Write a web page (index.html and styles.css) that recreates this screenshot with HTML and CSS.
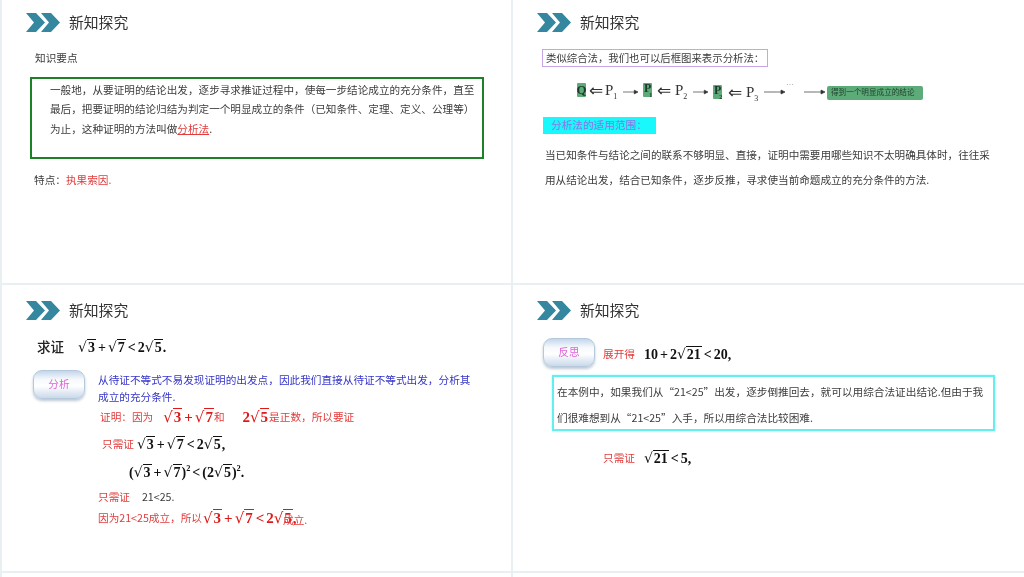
FILE: index.html
```html
<!DOCTYPE html>
<html lang="zh">
<head>
<meta charset="utf-8">
<title>新知探究</title>
<link rel="stylesheet" href="styles.css">
</head>
<body>
<main class="deck">

<section class="slide s1">
  <header class="head">
    <svg class="chev" viewBox="0 0 34 19"><path d="M0 0H10L19 9.500L10 19H0L8 9.500Z"/><path d="M15 0H25L34 9.500L25 19H15L23 9.500Z"/></svg>
    <h2 class="title">新知探究</h2>
  </header>
  <p class="t label">知识要点</p>
  <div class="greenbox">
    <p class="t def">一般地，从要证明的结论出发，逐步寻求推证过程中，使每一步结论成立的充分条件，直至最后，把要证明的结论归结为判定一个明显成立的条件（已知条件、定理、定义、公理等）为止，这种证明的方法叫做<u class="red">分析法</u>.</p>
  </div>
  <p class="t feature">特点：<span class="red">执果索因.</span></p>
</section>

<section class="slide s2">
  <header class="head">
    <svg class="chev" viewBox="0 0 34 19"><path d="M0 0H10L19 9.500L10 19H0L8 9.500Z"/><path d="M15 0H25L34 9.500L25 19H15L23 9.500Z"/></svg>
    <h2 class="title">新知探究</h2>
  </header>
  <p class="t purplebox">类似综合法，我们也可以后框图来表示分析法：</p>
  <div class="flow">
    <b class="tag">Q</b><span class="imp">⇐</span><span class="p">P<sub>1</sub></span>
    <svg class="arr a1" viewBox="0 0 16 6"><path d="M0 3H13M16 3L12 1V5Z"/></svg>
    <span class="tag tp">P<sub>1</sub></span><span class="imp imp2">⇐</span><span class="p">P<sub>2</sub></span>
    <svg class="arr a1" viewBox="0 0 16 6"><path d="M0 3H13M16 3L12 1V5Z"/></svg>
    <span class="tag tp low">P<sub>2</sub></span><span class="imp imp3 low">⇐</span><span class="p low">P<sub>3</sub></span>
    <svg class="arr a2" viewBox="0 0 21 6"><path d="M0 3H18M21 3L17 1V5Z"/></svg>
    <span class="dots">…</span>
    <svg class="arr a2" viewBox="0 0 21 6"><path d="M0 3H18M21 3L17 1V5Z"/></svg>
    <span class="result">得到一个明显成立的结论</span>
  </div>
  <p class="t cyanbar">分析法的适用范围：</p>
  <p class="t scope">当已知条件与结论之间的联系不够明显、直接，证明中需要用哪些知识不太明确具体时，往往采用从结论出发，结合已知条件，逐步反推，寻求使当前命题成立的充分条件的方法.</p>
</section>

<section class="slide s3">
  <header class="head">
    <svg class="chev" viewBox="0 0 34 19"><path d="M0 0H10L19 9.500L10 19H0L8 9.500Z"/><path d="M15 0H25L34 9.500L25 19H15L23 9.500Z"/></svg>
    <h2 class="title">新知探究</h2>
  </header>
  <div class="prove"><span class="provelabel">求证</span><span class="m m14"><i>√</i><s>3</s><em>+</em><i>√</i><s>7</s><em>&lt;</em>2<i>√</i><s>5</s>.</span></div>
  <div class="analysis">
    <span class="pill">分析</span>
    <p class="t blue">从待证不等式不易发现证明的出发点，因此我们直接从待证不等式出发，分析其成立的充分条件.</p>
  </div>
  <div class="t red line l1">证明：因为<span class="m mred m1"><i>√</i><s>3</s><em>+</em><i>√</i><s>7</s></span>和<span class="m mred m2">2<i>√</i><s>5</s></span>是正数，所以要证</div>
  <div class="t red line l2">只需证<span class="m m14 m3"><i>√</i><s>3</s><em>+</em><i>√</i><s>7</s><em>&lt;</em>2<i>√</i><s>5</s>,</span></div>
  <div class="line l3"><span class="m m14">(<i>√</i><s>3</s><em>+</em><i>√</i><s>7</s>)<sup>2</sup><em>&lt;</em>(2<i>√</i><s>5</s>)<sup>2</sup>.</span></div>
  <div class="t line l4"><span class="red">只需证</span><span class="ineq">21&lt;25.</span></div>
  <div class="t red line l5">因为21&lt;25成立，所以<span class="over"><span class="m mred m4"><i>√</i><s>3</s><em>+</em><i>√</i><s>7</s><em>&lt;</em>2<i>√</i><s>5</s>,</span><span class="shift2">成立.</span></span></div>
</section>

<section class="slide s4">
  <header class="head">
    <svg class="chev" viewBox="0 0 34 19"><path d="M0 0H10L19 9.500L10 19H0L8 9.500Z"/><path d="M15 0H25L34 9.500L25 19H15L23 9.500Z"/></svg>
    <h2 class="title">新知探究</h2>
  </header>
  <div class="expand">
    <span class="pill">反思</span>
    <span class="t red exlabel">展开得</span>
    <span class="m m14 exm">10<em>+</em>2<i>√</i><s>21</s><em>&lt;</em>20,</span>
  </div>
  <p class="t cyanbox">在本例中，如果我们从“21&lt;25”出发，逐步倒推回去，就可以用综合法证出结论.但由于我们很难想到从“21&lt;25”入手，所以用综合法比较困难.</p>
  <div class="need"><span class="t red">只需证</span><span class="m m14 exm2"><i>√</i><s>21</s><em>&lt;</em>5,</span></div>
</section>

<section class="slide"></section>
<section class="slide"></section>
</main>
</body>
</html>
```
FILE: styles.css
```css
* { box-sizing: border-box; margin: 0; padding: 0; }
html, body { width: 1024px; height: 577px; overflow: hidden; }
body { background: #e9f0f2; font-family: "Noto Sans CJK SC", "Liberation Sans", sans-serif; }

.deck {
  display: grid;
  grid-template-columns: 509px 511px;
  grid-template-rows: 283px 286px 4px;
  column-gap: 2px;
  row-gap: 2px;
  margin-left: 2px;
}
.slide { background: #fff; overflow: hidden; filter: blur(0.35px); }

.head { display: flex; align-items: center; gap: 9px; height: 19px; margin-top: 13px; margin-left: 24px; }
.s3 .head, .s4 .head { margin-top: 16px; }
.chev { width: 34px; height: 19px; fill: #35879f; flex: none; }
.title { font-size: 14.800px; font-weight: 400; color: #333; line-height: 19px; position: relative; top: -1px; }

.t { font-size: 10.65px; color: #3c3c3c; line-height: 16px; }
.red { color: #e23c3c; }

.label { margin: 18px 0 0 33px; }
.greenbox { margin: 11px 0 0 28px; width: 454px; height: 82px; border: 2px solid #1f8126; padding: 1px 6px 0 18px; }
.def { line-height: 19.3px; font-size: 10.62px; }
.feature { margin: 13px 0 0 32px; }

.purplebox { margin: 17px 0 0 29px; width: 226px; height: 18px; border: 1.500px solid #c8a6e6; padding-left: 3px; line-height: 15px; font-size: 10.4px; white-space: nowrap; }
.flow { display: flex; align-items: center; height: 20px; margin: 13px 0 0 64px; font-family: "Liberation Serif", serif; font-size: 15px; color: #333; }
.tag { background: #5cab78; color: #1f3a2a; height: 14px; width: 9px; border-radius: 1px; font-size: 13px; line-height: 14px; display: flex; justify-content: center; font-family: "Liberation Serif", serif; flex: none; }
.tp { font-weight: 700; font-size: 12px; line-height: 11px; justify-content: flex-start; padding-left: 1px; }
.tag sub { font-size: 6px; line-height: 8px; height: 8px; margin: 8px 0 0 -2px; }
.imp { width: 14px; margin: 0 2px 0 3px; font-size: 17px; line-height: 16px; text-align: center; font-family: "DejaVu Sans", sans-serif; flex: none; }
.imp2 { margin: 0 4px 0 5px; }
.imp3 { margin: 3px 4px 0 6px; }
.p { width: 18px; line-height: 18px; flex: none; }
.p sub { font-size: 8px; line-height: 0; }
.low { margin-top: 3px; }
.arr { height: 6px; flex: none; fill: #333; stroke: #333; stroke-width: 0.7; }
.a1 { width: 15px; margin: 3px 5px 0 0; }
.a2 { width: 21px; margin: 3px 0 0 0; }
.dots { width: 19px; margin: -16px 0 0 0; font-size: 8px; color: #888; padding-left: 1px; flex: none; }
.result { width: 96px; height: 14px; background: #5cab78; border-radius: 2px; font-family: "Noto Sans CJK SC", sans-serif; font-size: 7.600px; line-height: 12px; padding-left: 4px; color: #20402c; margin: 6px 0 0 2px; flex: none; }
.cyanbar { margin: 17px 0 0 30px; width: 113px; height: 17px; background: #19f8fb; color: #8f70e6; padding-left: 8px; line-height: 16px; }
.scope { margin: 8px 0 0 32px; width: 450px; line-height: 25px; font-size: 10.6px; }

.m { font-family: "Liberation Serif", serif; font-weight: 700; color: #111; white-space: nowrap; }
.m i { font-style: normal; font-weight: 400; font-family: "DejaVu Sans", sans-serif; }
.m s { text-decoration: none; border-top: 1px solid currentColor; padding: 0 1px; line-height: 1; }
.m em { font-style: normal; margin: 0 2px; }
.m sup { font-size: 0.6em; line-height: 0; }
.m14 { font-size: 14px; }
.mred { color: #e01818; font-size: 15px; }

.prove { display: flex; align-items: center; gap: 14px; height: 22px; margin: 16px 0 0 35px; }
.provelabel { font-family: "Noto Sans CJK SC", serif; font-weight: 500; font-size: 13.500px; color: #222; position: relative; top: -1px; }
.analysis { display: flex; gap: 13px; margin: 12px 0 0 31px; }
.pill { width: 52px; height: 29px; flex: none; border: 1px solid #b6c9dc; border-radius: 9px; background: linear-gradient(#c3d6ec 0%, #f5f8fc 30%, #fff 55%, #c9d9ea 100%); box-shadow: 0 2px 3px #bcc8d4; color: #e060d8; font-size: 10.65px; text-align: center; line-height: 26px; }
.blue { width: 378px; color: #3434c8; line-height: 17px; margin-top: 1px; }

.line { display: flex; align-items: center; white-space: nowrap; }
.l1 { margin: 2px 0 0 98px; height: 20px; }
.m1 { margin-left: 10px; }
.m2 { margin-left: 18px; }
.l2 { margin: 7px 0 0 100px; height: 20px; }
.m3 { margin-left: 3px; }
.l3 { margin: 8px 0 0 127px; height: 20px; }
.l4 { margin: 7px 0 0 96px; height: 16px; }
.ineq { margin-left: 12px; }
.l5 { margin: 2px 0 0 96px; height: 22px; }
.over { position: relative; display: block; margin-left: 1px; }
.shift2 { position: absolute; left: 80px; top: 2px; }

.expand { display: flex; align-items: center; margin: 17px 0 0 30px; height: 30px; }
.exlabel { margin-left: 8px; margin-top: 4px; }
.exm { margin: 4px 0 0 9px; }
.cyanbox { margin: 8px 0 0 39px; width: 443px; height: 56px; border: 2px solid #66eeee; padding: 2px 3px; line-height: 26px; box-shadow: 0 0 2px #9ff; }
.need { display: flex; align-items: center; margin: 17px 0 0 90px; height: 20px; }
.exm2 { margin-left: 9px; }
```
